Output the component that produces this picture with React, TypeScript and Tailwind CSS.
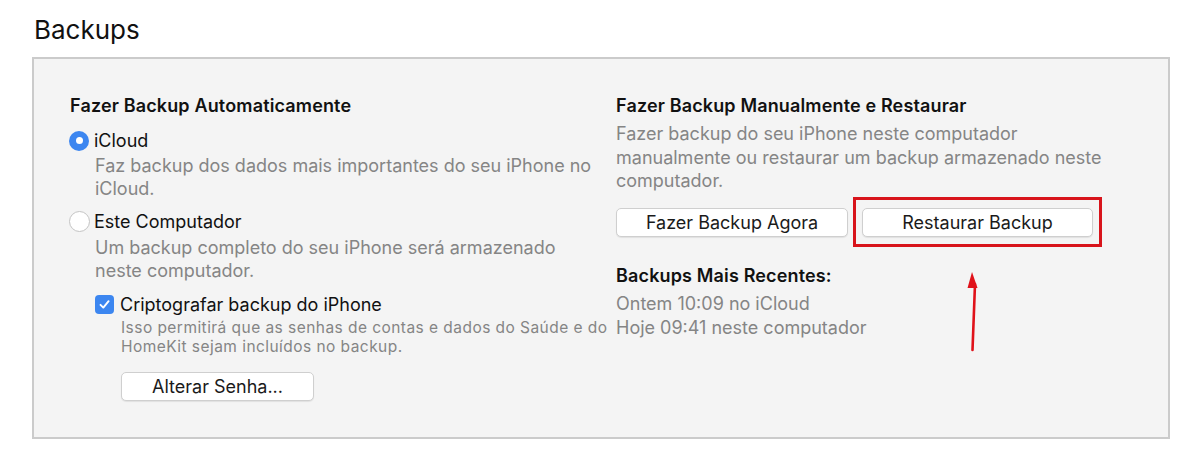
import React from 'react';

const font = { fontFamily: 'Inter, "Noto Sans", sans-serif' };

function Radio({ checked }: { checked: boolean }) {
  return checked ? (
    <span className="w-[20px] h-[20px] rounded-full bg-[#3c86f0] flex items-center justify-center shrink-0">
      <span className="w-[7px] h-[7px] rounded-full bg-white" />
    </span>
  ) : (
    <span className="w-[21px] h-[21px] rounded-full bg-white border border-[#c4c4c4] shrink-0" />
  );
}

function MacButton({ label, className = '' }: { label: string; className?: string }) {
  return (
    <button
      className={`h-[29px] bg-white border border-[#cfcfcf] rounded-[5px] shadow-[0_1px_1px_rgba(0,0,0,0.08)] text-[18px] leading-[27px] text-[#1a1a1a] ${className}`}
    >
      {label}
    </button>
  );
}

export default function App() {
  return (
    <div className="relative w-[1193px] h-[471px] bg-white" style={font}>
      <h1 className="pl-[34px] pt-[12px] text-[26px] leading-[36px] text-[#111]">Backups</h1>

      <div className="mt-[9px] ml-[32px] w-[1138px] h-[382px] bg-[#f4f4f4] border-2 border-[#cbcbcb] flex pl-[36px] pt-[35px]">
        {/* Left column */}
        <div className="w-[546px] shrink-0">
          <h2 className="text-[18px] leading-[23px] font-semibold tracking-[0.15px] text-[#111]">Fazer Backup Automaticamente</h2>

          <div className="mt-[12px] flex items-center gap-[5px] -ml-[1px]">
            <Radio checked />
            <span className="text-[18px] leading-[23px] text-[#111]">iCloud</span>
          </div>
          <p className="ml-[25px] mt-[2px] text-[18px] leading-[23px] text-[#858585]">
            Faz backup dos dados mais importantes do seu iPhone no
            <br />
            iCloud.
          </p>

          <div className="mt-[10px] flex items-center gap-[4px] -ml-[1px]">
            <Radio checked={false} />
            <span className="text-[18px] leading-[23px] text-[#111]">Este Computador</span>
          </div>
          <p className="ml-[25px] mt-[3px] text-[18px] leading-[23px] text-[#858585]">
            Um backup completo do seu iPhone será armazenado
            <br />
            neste computador.
          </p>

          <div className="ml-[25px] mt-[11px] flex items-center gap-[6px]">
            <span className="w-[19px] h-[19px] rounded-[4px] bg-[#3c86f0] flex items-center justify-center shrink-0">
              <svg width="13" height="13" viewBox="0 0 13 13" fill="none">
                <path d="M2.5 6.8 L5.3 9.6 L10.6 3.2" stroke="white" strokeWidth="1.9" strokeLinecap="round" strokeLinejoin="round" />
              </svg>
            </span>
            <span className="text-[18px] leading-[23px] text-[#111]">Criptografar backup do iPhone</span>
          </div>
          <p className="ml-[51px] mt-[2px] text-[15.5px] leading-[19px] tracking-[0.45px] text-[#858585]">
            Isso permitirá que as senhas de contas e dados do Saúde e do
            <br />
            HomeKit sejam incluídos no backup.
          </p>
          <MacButton label="Alterar Senha..." className="ml-[51px] mt-[16px] w-[193px]" />
        </div>

        {/* Right column */}
        <div className="w-[500px] shrink-0">
          <h2 className="text-[18px] leading-[23px] font-semibold tracking-[0.15px] text-[#111]">Fazer Backup Manualmente e Restaurar</h2>
          <p className="mt-[5px] text-[18px] leading-[23.5px] text-[#858585]">
            Fazer backup do seu iPhone neste computador
            <br />
            manualmente ou restaurar um backup armazenado neste
            <br />
            computador.
          </p>
          <div className="mt-[4px] flex items-start">
            <MacButton label="Fazer Backup Agora" className="mt-[11px] w-[232px]" />
            <div className="ml-[5px] border-[3px] border-[#d8141b] pt-[8px] pb-[7px] px-[6px]">
              <MacButton label="Restaurar Backup" className="w-[231px] block" />
            </div>
          </div>
          <h3 className="mt-[17px] text-[18px] leading-[23px] font-semibold tracking-[0.15px] text-[#111]">Backups Mais Recentes:</h3>
          <p className="mt-[5px] text-[18px] leading-[24px] text-[#858585]">
            Ontem 10:09 no iCloud
            <br />
            Hoje 09:41 neste computador
          </p>
        </div>
      </div>

      {/* Annotation arrow */}
      <svg className="absolute left-[960px] top-[266px]" width="30" height="90" viewBox="0 0 30 90">
        <path d="M15 18 L12.5 84" stroke="#e0121a" strokeWidth="2.6" strokeLinecap="round" />
        <path d="M12 6 L17.5 22 L7.5 22 Z" fill="#e0121a" />
      </svg>
    </div>
  );
}
